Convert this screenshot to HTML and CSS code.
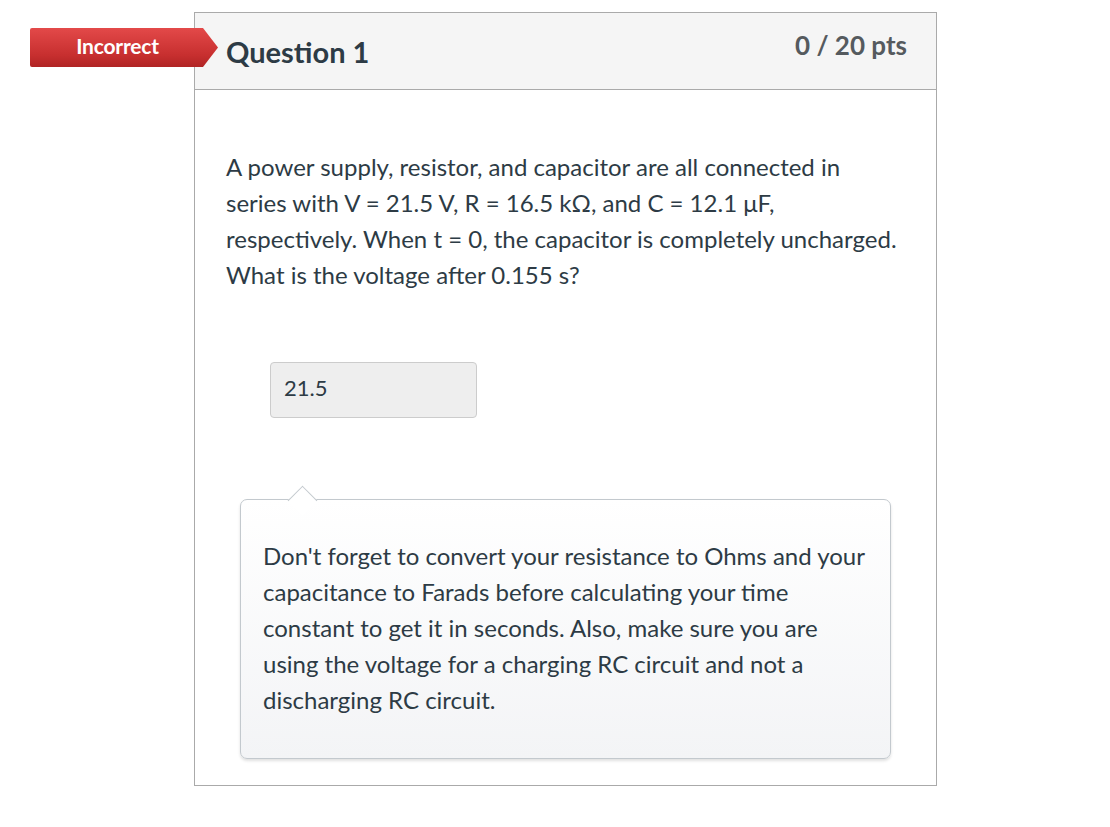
FILE: index.html
```html
<!DOCTYPE html>
<html>
<head>
<meta charset="utf-8">
<link rel="stylesheet" href="styles.css">
</head>
<body>
<div class="page">
  <div class="question">
    <div class="badge">Incorrect</div>
    <div class="q-header">
      <h2 class="q-title">Question 1</h2>
      <div class="q-pts">0 / 20 pts</div>
    </div>
    <div class="q-body">
      <p class="q-text">A power supply, resistor, and capacitor are all connected in series with V = 21.5 V, R = 16.5 kΩ, and C = 12.1 μF, respectively. When t = 0, the capacitor is completely uncharged. What is the voltage after 0.155 s?</p>
      <div class="answer">21.5</div>
      <div class="comment">
        <p>Don't forget to convert your resistance to Ohms and your capacitance to Farads before calculating your time constant to get it in seconds. Also, make sure you are using the voltage for a charging RC circuit and not a discharging RC circuit.</p>
      </div>
    </div>
  </div>
</div>
</body>
</html>
```

FILE: styles.css
```css
* { box-sizing: border-box; }
html, body { margin: 0; padding: 0; background: #fff; }
body { font-family: Lato, "Noto Sans", sans-serif; color: #2d3b45; }
.page { padding: 12px 0 0 194px; }
.question {
  position: relative;
  width: 743px;
  height: 774px;
  border: 1px solid #aaaaaa;
}
.badge {
  position: absolute;
  left: -165px;
  top: 15px;
  width: 188px;
  height: 39px;
  color: #fff;
  font-weight: 700;
  font-size: 21px;
  line-height: 35px;
  padding-right: 13px;
  text-align: center;
  letter-spacing: -0.2px;
  background: linear-gradient(#e34949, #c72f2f 70%, #b02424);
  clip-path: polygon(0 0, 173px 0, 188px 50%, 173px 100%, 0 100%);
  border-radius: 2px 0 0 2px;
}
.q-header {
  display: flex;
  justify-content: space-between;
  align-items: flex-start;
  height: 77px;
  background: #f5f5f5;
  border-bottom: 1px solid #aaaaaa;
  padding: 0 29px 0 31px;
}
.q-title {
  margin: 21px 0 0;
  font-size: 29px;
  line-height: 36px;
  font-weight: 700;
  color: #2d3b45;
}
.q-pts {
  margin-top: 14px;
  font-size: 26px;
  line-height: 36px;
  font-weight: 700;
  color: #555a5e;
}
.q-body { padding: 59px 33px 0 31px; }
.q-text {
  margin: 0;
  font-size: 24px;
  line-height: 36px;
  color: #2d3b45;
}
.answer {
  margin: 69px 0 0 44px;
  width: 207px;
  height: 56px;
  background: #eeeeee;
  border: 1px solid #cccccc;
  border-radius: 4px;
  padding: 12px 13px;
  font-size: 22px;
  line-height: 26px;
  color: #2d3b45;
}
.comment {
  position: relative;
  margin: 81px 0 0 14px;
  width: 651px;
  height: 260px;
  border: 1px solid #c3c9ce;
  border-radius: 7px;
  background: linear-gradient(#ffffff, #f3f4f6);
  box-shadow: 0 2px 3px rgba(0,0,0,0.12);
  padding: 38px 22px 0 22px;
}
.comment::before {
  content: "";
  position: absolute;
  left: 51px;
  top: -10px;
  width: 20px;
  height: 20px;
  background: #ffffff;
  border-left: 1px solid #c3c9ce;
  border-top: 1px solid #c3c9ce;
  transform: rotate(45deg);
}
.comment p {
  margin: 0;
  font-size: 24px;
  line-height: 36px;
  color: #2d3b45;
}
```
